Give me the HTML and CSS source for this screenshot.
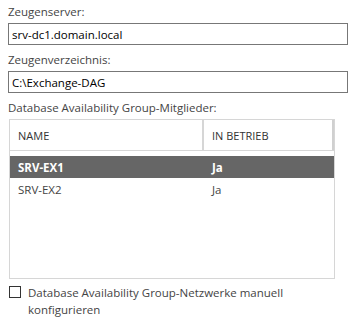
FILE: index.html
```html
<!DOCTYPE html>
<html lang="de">
<head>
  <meta charset="UTF-8">
  <title>Database Availability Group</title>
  <link rel="stylesheet" href="styles.css">
</head>
<body>

<div class="form">
  <label class="field-label" for="server">Zeugenserver:</label>
  <input class="text-input" type="text" id="server" value="srv-dc1.domain.local">

  <label class="field-label" for="dir">Zeugenverzeichnis:</label>
  <input class="text-input" type="text" id="dir" value="C:\Exchange-DAG">

  <div class="field-label">Database Availability Group-Mitglieder:</div>
  <div class="members">
    <div class="members-head">
      <div class="col-name">NAME</div>
      <div class="col-state">IN BETRIEB</div>
    </div>
    <div class="members-body">
      <div class="member selected">
        <div class="col-name">SRV-EX1</div>
        <div class="col-state">Ja</div>
      </div>
      <div class="member">
        <div class="col-name">SRV-EX2</div>
        <div class="col-state">Ja</div>
      </div>
    </div>
  </div>

  <label class="check-row">
    <span class="checkbox"></span>
    <span>Database Availability Group-Netzwerke manuell konfigurieren</span>
  </label>
</div>

</body>
</html>
```

FILE: styles.css
```css
body {
  margin: 0;
  padding: 0;
  background: white;
  font-family: "Open Sans", "Noto Sans", sans-serif;
  font-size: 11.5px;
  color: #444;
}

.form {
  padding: 4px 8px 0 8px;
  width: 340px;
}

.field-label {
  display: block;
  line-height: 16px;
  margin-bottom: 3px;
  color: #444;
}

.text-input {
  display: block;
  width: 100%;
  height: 22px;
  box-sizing: border-box;
  border: 1px solid #777;
  padding: 0 3px;
  margin: 0 0 7px 0;
  font-family: inherit;
  font-size: 11.5px;
  color: #000;
  outline: none;
}

.members {
  margin-left: 1px;
  width: 326px;
  height: 160px;
  box-sizing: border-box;
  border: 1px solid #d6d6d6;
}

.members-head {
  display: flex;
  height: 30px;
  align-items: stretch;
  border-bottom: 1px solid #d6d6d6;
  font-size: 11px;
  color: #333;
}

.members-head .col-name,
.members-head .col-state {
  display: flex;
  align-items: center;
}

.members-head .col-name {
  border-right: 2px solid #d6d6d6;
}

.members-head .col-state {
  border-right: 2px solid #d0d0d0;
}

.col-name {
  width: 194px;
  padding-left: 8px;
  box-sizing: border-box;
}

.col-state {
  flex: 1;
  padding-left: 8px;
}

.members-body {
  padding-top: 5px;
}

.member {
  display: flex;
  height: 22px;
  align-items: center;
  color: #444;
}

.member.selected {
  background-color: #666;
  color: white;
  font-weight: bold;
}

.check-row {
  display: flex;
  align-items: flex-start;
  margin-top: 5px;
  line-height: 17px;
  color: #444;
  width: 300px;
}

.checkbox {
  flex: none;
  width: 12px;
  height: 12px;
  box-sizing: border-box;
  border: 1px solid #333;
  margin: 2px 7px 0 1px;
}
```
